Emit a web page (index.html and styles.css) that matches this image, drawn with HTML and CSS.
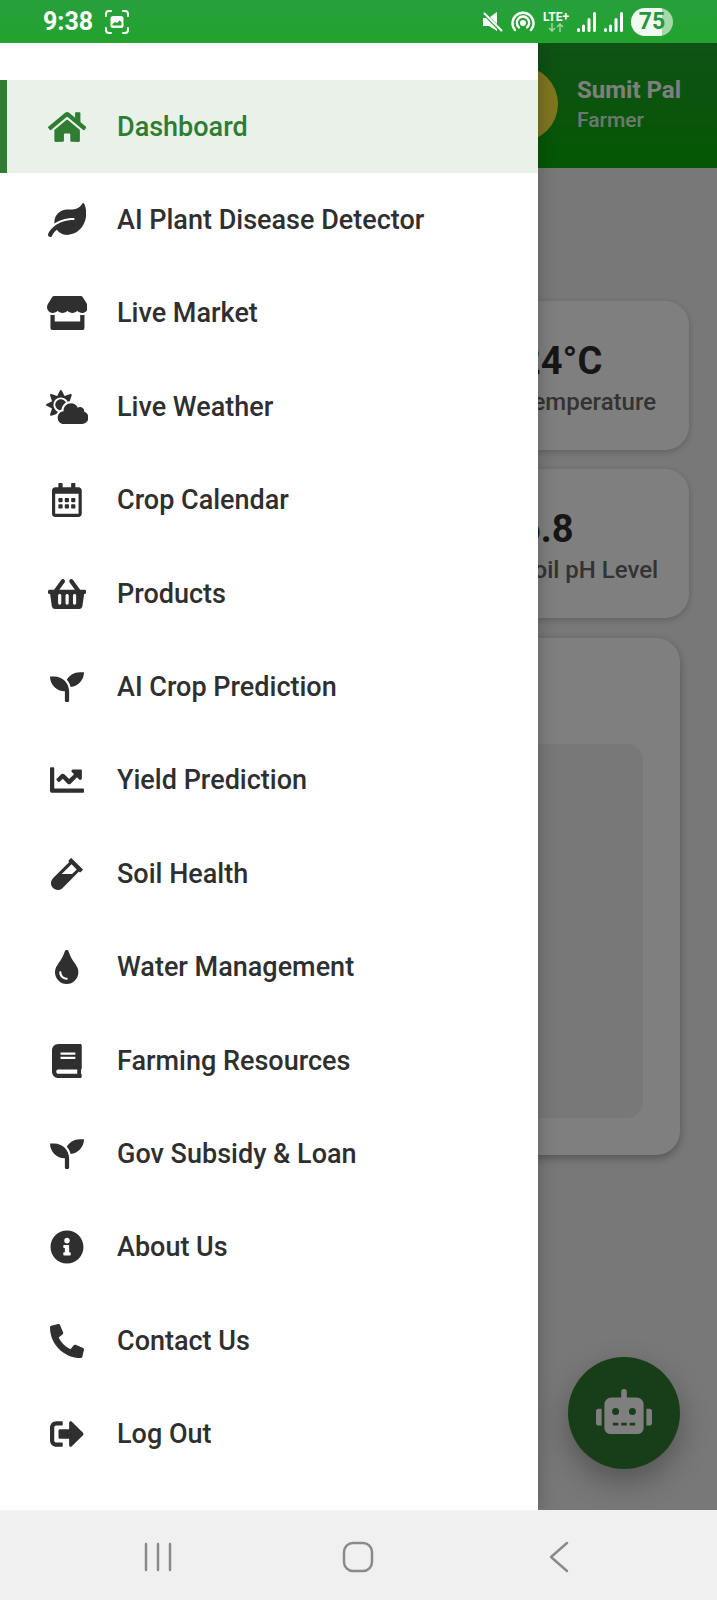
FILE: index.html
```html
<!DOCTYPE html>
<html lang="en">
<head>
<meta charset="utf-8">
<meta name="viewport" content="width=device-width, initial-scale=1">
<title>Farmer Dashboard</title>
<link rel="stylesheet" href="styles.css">
</head>
<body>
<div class="status-bar">
  <div class="status-group">
    <span class="clock">9:38</span>
    <svg class="capture-icon" viewBox="0 0 24 24" fill="none" stroke="currentColor" stroke-width="2" stroke-linecap="round">
      <path d="M1 6V4a3 3 0 0 1 3-3h2M18 1h2a3 3 0 0 1 3 3v2M23 18v2a3 3 0 0 1-3 3h-2M6 23H4a3 3 0 0 1-3-3v-2"/>
      <path fill="currentColor" stroke="none" fill-rule="evenodd" d="M8 6h8a2.500 2.500 0 0 1 2.500 2.500v7a2.500 2.500 0 0 1-2.500 2.500H8a2.500 2.500 0 0 1-2.500-2.500v-7A2.500 2.500 0 0 1 8 6zM7.500 15.500h9V12l-2-1.500-2.500 2.500-2-1-2.500 2z"/>
    </svg>
  </div>
  <div class="status-group status-right">
    <svg class="mute-icon" viewBox="0 0 20 20"><path fill="currentColor" d="M0 6h3l11 11v2L6 14H0zM7 5l7-5v12z"/><path stroke="currentColor" stroke-width="2" stroke-linecap="round" d="M1.500 1.500l17 17"/></svg>
    <svg class="hotspot-icon" viewBox="0 0 24 22" fill="none" stroke="currentColor" stroke-width="2.400" stroke-linecap="round"><path d="M4 19A10.500 10.500 0 1 1 20 19"/><path d="M8 16.500A6.200 6.200 0 1 1 16 16.500"/><circle cx="12" cy="12" r="1.800" fill="currentColor"/></svg>
    <div class="network">
      <span>LTE+</span>
      <svg viewBox="0 0 16 9" fill="none" stroke="currentColor" stroke-width="1.500"><path d="M4 0v8M1 5l3 3 3-3M12 9V1M9 4l3-3 3 3"/></svg>
    </div>
    <svg class="signal-icon" viewBox="0 0 19 20" fill="none" stroke="currentColor" stroke-width="3" stroke-linecap="round"><path d="M1.500 17.500v1M6.500 14v4.500M12 7.500v11M17.500 1.500v17"/></svg>
    <svg class="signal-icon" viewBox="0 0 19 20" fill="none" stroke="currentColor" stroke-width="3" stroke-linecap="round"><path d="M1.500 17.500v1M6.500 14v4.500M12 7.500v11M17.500 1.500v17"/></svg>
    <span class="battery">75</span>
  </div>
</div>

<div class="app">
  <header class="app-header">
    <div class="avatar"></div>
    <div class="profile">
      <strong class="profile-name">Sumit Pal</strong>
      <span class="profile-role">Farmer</span>
    </div>
  </header>
  <main class="content">
    <section class="stats">
      <article class="stat-card">
        <strong class="stat-value">24°C</strong>
        <span class="stat-label">Temperature</span>
      </article>
      <article class="stat-card">
        <strong class="stat-value">6.8</strong>
        <span class="stat-label">Soil pH Level</span>
      </article>
    </section>
    <section class="panel"><div class="panel-body"></div></section>
  </main>
  <button class="assistant" type="button" aria-label="Assistant">
    <svg viewBox="0 0 640 512" fill="currentColor"><path d="M32 224H64V416H32A32 32 0 0 1 0 384V256A32 32 0 0 1 32 224Zm512-48V448a64 64 0 0 1-64 64H160a64 64 0 0 1-64-64V176a80 80 0 0 1 80-80H288V32a32 32 0 0 1 64 0V96H464A80 80 0 0 1 544 176ZM264 256a40 40 0 1 0-40 40A40 40 0 0 0 264 256Zm-8 128H192v32h64Zm96 0H288v32h64ZM456 256a40 40 0 1 0-40 40A40 40 0 0 0 456 256Zm-8 128H384v32h64ZM640 256V384a32 32 0 0 1-32 32H576V224h32A32 32 0 0 1 640 256Z"/></svg>
  </button>
  <div class="scrim"></div>

  <nav class="drawer" aria-label="Main menu">
    <ul class="menu">
      <li><a class="menu-link active" href="#"><span class="menu-icon"><svg viewBox="0 0 576 512"><path d="M280.370 148.260L96 300.110V464a16 16 0 0 0 16 16l112.060-.29a16 16 0 0 0 15.920-16V368a16 16 0 0 1 16-16h64a16 16 0 0 1 16 16v95.640a16 16 0 0 0 16 16.050L464 480a16 16 0 0 0 16-16V300L295.670 148.260a12.190 12.190 0 0 0-15.300 0zM571.600 251.470L488 182.560V44.050a12 12 0 0 0-12-12h-56a12 12 0 0 0-12 12v72.610L318.470 43a48 48 0 0 0-61 0L4.340 251.470a12 12 0 0 0-1.600 16.900l25.500 31A12 12 0 0 0 45.150 301l235.220-193.740a12.190 12.190 0 0 1 15.300 0L530.900 301a12 12 0 0 0 16.900-1.600l25.500-31a12 12 0 0 0-1.700-16.930z"/></svg></span>Dashboard</a></li>
      <li><a class="menu-link" href="#"><span class="menu-icon"><svg viewBox="0 0 576 512"><path d="M546.2 9.7c-5.6-12.5-21.6-13-28.3-1.2C486.9 62.4 431.4 96 368 96h-80C182 96 96 182 96 288c0 7 .8 13.7 1.5 20.5C161.3 262.8 253.4 224 384 224c8.8 0 16 7.2 16 16s-7.2 16-16 16C132.600 256 26 410.1 2.4 468c-6.6 16.3 1.2 34.9 17.5 41.6 16.4 6.8 35-1.1 41.8-17.3 1.5-3.6 20.9-47.9 71.9-90.6 32.4 43.900 94 85.800 174.900 77.200C465.500 467.500 576 326.700 576 154.300c0-50.200-10.800-102.200-29.800-144.600z"/></svg></span>AI Plant Disease Detector</a></li>
      <li><a class="menu-link" href="#"><span class="menu-icon"><svg viewBox="0 0 616 512"><path d="M602 118.600L537.100 15C531.300 5.700 521 0 510 0H106C95 0 84.700 5.700 78.900 15L14 118.600c-33.500 53.500-3.800 127.900 58.800 136.400 4.500.6 9.100.9 13.700.9 29.600 0 55.800-13 73.800-33.100 18 20.100 44.300 33.100 73.800 33.100s55.800-13 73.800-33.100c18 20.100 44.300 33.100 73.800 33.100 29.600 0 55.800-13 73.800-33.100 18.100 20.100 44.300 33.100 73.800 33.100 4.700 0 9.200-.3 13.700-.9 62.800-8.400 92.600-82.800 59-136.400zM529.500 288c-10 0-19.900-1.500-29.500-3.800V384H116v-99.800c-9.600 2.200-19.500 3.800-29.500 3.800-6 0-12.100-.4-18-1.200-5.600-.8-11.100-2.100-16.400-3.600V480c0 17.700 14.300 32 32 32h448c17.700 0 32-14.300 32-32V283.200c-5.400 1.600-10.800 2.900-16.400 3.600-6.100.8-12.100 1.200-18.200 1.200z"/></svg></span>Live Market</a></li>
      <li><a class="menu-link" href="#"><span class="menu-icon"><svg viewBox="0 0 640 512"><path d="M575.200 325.700c.2-1.900.8-3.700.8-5.600 0-35.300-28.700-64-64-64-12.600 0-24.200 3.800-34.100 10-17.600-38.800-56.500-66-101.900-66-61.800 0-112 50.100-112 112 0 3 .7 5.800.9 8.700-49.600 3.700-88.900 44.700-88.900 95.300 0 53 43 96 96 96h272c53 0 96-43 96-96 0-42.100-27.200-77.400-64.800-90.400zm-430.400-22.600c-43.700-43.700-43.700-114.700 0-158.300 43.700-43.700 114.700-43.700 158.400 0 9.700 9.700 16.900 20.900 22.300 32.700 9.800-3.700 20.100-6 30.700-7.500L386 81.100c4-11.900-7.300-23.100-19.200-19.200L279 91.200 237.500 8.400C232-2.800 216-2.800 210.400 8.400L169 91.200 81.100 61.900C69.300 58 58 69.300 61.900 81.100l29.300 87.800-82.800 41.500c-11.200 5.600-11.200 21.500 0 27.100l82.800 41.400-29.300 87.800c-4 11.900 7.300 23.100 19.200 19.200l76.100-25.300c6.100-12.400 14-23.700 23.600-33.500-13-5.400-25.400-13.400-36-24zm-4.800-79.200c0 40.800 29.300 74.800 67.900 82.300 8-4.700 16.300-8.800 25.200-11.700 5.400-44.300 31-82.500 67.400-105C287.300 160.400 258 140 224 140c-46.300 0-84 37.600-84 83.900z"/></svg></span>Live Weather</a></li>
      <li><a class="menu-link" href="#"><span class="menu-icon"><svg viewBox="0 0 448 512"><path d="M148 288h-40c-6.600 0-12-5.400-12-12v-40c0-6.600 5.400-12 12-12h40c6.600 0 12 5.400 12 12v40c0 6.600-5.400 12-12 12zm108-12v-40c0-6.600-5.400-12-12-12h-40c-6.600 0-12 5.400-12 12v40c0 6.600 5.400 12 12 12h40c6.600 0 12-5.400 12-12zm96 0v-40c0-6.600-5.400-12-12-12h-40c-6.600 0-12 5.400-12 12v40c0 6.600 5.400 12 12 12h40c6.600 0 12-5.400 12-12zm-96 96v-40c0-6.600-5.400-12-12-12h-40c-6.600 0-12 5.400-12 12v40c0 6.600 5.400 12 12 12h40c6.600 0 12-5.400 12-12zm-96 0v-40c0-6.600-5.400-12-12-12h-40c-6.600 0-12 5.400-12 12v40c0 6.600 5.400 12 12 12h40c6.600 0 12-5.400 12-12zm192 0v-40c0-6.600-5.400-12-12-12h-40c-6.600 0-12 5.400-12 12v40c0 6.600 5.400 12 12 12h40c6.600 0 12-5.400 12-12zm96-260v352c0 26.500-21.500 48-48 48H48c-26.500 0-48-21.500-48-48V112c0-26.500 21.500-48 48-48h48V12c0-6.600 5.400-12 12-12h40c6.600 0 12 5.400 12 12v52h128V12c0-6.600 5.400-12 12-12h40c6.600 0 12 5.400 12 12v52h48c26.500 0 48 21.500 48 48zm-48 346V160H48v298c0 3.300 2.700 6 6 6h340c3.300 0 6-2.700 6-6z"/></svg></span>Crop Calendar</a></li>
      <li><a class="menu-link" href="#"><span class="menu-icon"><svg viewBox="0 0 576 512"><path d="M576 216v16c0 13.255-10.745 24-24 24h-8l-26.113 182.788C514.509 462.435 494.257 480 470.370 480H105.630c-23.887 0-44.139-17.565-47.518-41.212L32 256h-8c-13.255 0-24-10.745-24-24v-16c0-13.255 10.745-24 24-24h67.341l106.780-146.821c10.395-14.292 30.407-17.453 44.701-7.058 14.293 10.395 17.453 30.408 7.058 44.701L170.477 192h235.046L326.120 82.821c-10.395-14.292-7.234-34.306 7.059-44.701 14.291-10.395 34.306-7.235 44.701 7.058L484.659 192H552c13.255 0 24 10.745 24 24zM312 392V280c0-13.255-10.745-24-24-24s-24 10.745-24 24v112c0 13.255 10.745 24 24 24s24-10.745 24-24zm112 0V280c0-13.255-10.745-24-24-24s-24 10.745-24 24v112c0 13.255 10.745 24 24 24s24-10.745 24-24zm-224 0V280c0-13.255-10.745-24-24-24s-24 10.745-24 24v112c0 13.255 10.745 24 24 24s24-10.745 24-24z"/></svg></span>Products</a></li>
      <li><a class="menu-link" href="#"><span class="menu-icon"><svg viewBox="0 0 512 512"><path d="M64 96H0c0 123.700 100.300 224 224 224v144c0 8.800 7.200 16 16 16h32c8.800 0 16-7.200 16-16V320C288 196.300 187.700 96 64 96zm384-64c-84.200 0-157.400 46.500-195.700 115.200 27.700 30.200 48.200 66.900 59 107.600C424 243.100 512 147.900 512 32h-64z"/></svg></span>AI Crop Prediction</a></li>
      <li><a class="menu-link" href="#"><span class="menu-icon"><svg viewBox="0 0 512 512"><path d="M496 384H64V80c0-8.840-7.160-16-16-16H16C7.160 64 0 71.160 0 80v336c0 17.670 14.330 32 32 32h464c8.840 0 16-7.160 16-16v-32c0-8.840-7.160-16-16-16zM464 96H345.940c-21.380 0-32.090 25.850-16.970 40.970l32.400 32.400L288 242.750l-73.370-73.370c-12.500-12.500-32.760-12.500-45.250 0l-68.690 68.690c-6.250 6.250-6.250 16.380 0 22.630l22.620 22.620c6.250 6.250 16.380 6.250 22.630 0L192 237.250l73.370 73.370c12.500 12.500 32.760 12.500 45.250 0l96-96 32.400 32.400c15.120 15.120 40.970 4.410 40.970-16.970V112c.01-8.840-7.150-16-15.990-16z"/></svg></span>Yield Prediction</a></li>
      <li><a class="menu-link" href="#"><span class="menu-icon"><svg viewBox="0 0 480 512"><path d="M477.700 186.100L309.500 18.300c-3.100-3.100-8.200-3.100-11.300 0l-34 33.900c-3.100 3.100-3.100 8.200 0 11.300l11.200 11.100L33 316.500c-38.800 38.700-45.100 102-9.400 143.500 20.600 24 49.500 36 78.400 35.900 26.400 0 52.800-10 72.900-30.100l246.300-245.700 11.200 11.100c3.100 3.100 8.200 3.100 11.300 0l34-33.900c3.100-3 3.100-8.100 0-11.200zM318 256H161l148-147.700 78.500 78.300L318 256z"/></svg></span>Soil Health</a></li>
      <li><a class="menu-link" href="#"><span class="menu-icon"><svg viewBox="0 0 352 512"><path d="M205.220 22.090c-7.940-28.780-49.440-30.120-58.440 0C100.010 179.850 0 222.720 0 333.910 0 432.350 78.720 512 176 512s176-79.650 176-178.090c0-111.750-99.790-153.340-146.780-311.820zM176 448c-61.750 0-112-50.250-112-112 0-8.840 7.160-16 16-16s16 7.160 16 16c0 44.110 35.890 80 80 80 8.840 0 16 7.160 16 16s-7.160 16-16 16z"/></svg></span>Water Management</a></li>
      <li><a class="menu-link" href="#"><span class="menu-icon"><svg viewBox="0 0 448 512"><path d="M448 360V24c0-13.300-10.700-24-24-24H96C43 0 0 43 0 96v320c0 53 43 96 96 96h328c13.300 0 24-10.700 24-24v-16c0-7.500-3.500-14.300-8.900-18.700-4.200-15.400-4.200-59.300 0-74.700 5.400-4.300 8.900-11.100 8.900-18.600zM128 134c0-3.300 2.700-6 6-6h212c3.300 0 6 2.700 6 6v20c0 3.300-2.700 6-6 6H134c-3.300 0-6-2.700-6-6v-20zm0 64c0-3.300 2.700-6 6-6h212c3.300 0 6 2.700 6 6v20c0 3.300-2.700 6-6 6H134c-3.300 0-6-2.700-6-6v-20zm253.400 250H96c-17.700 0-32-14.300-32-32 0-17.600 14.400-32 32-32h285.400c-1.900 17.100-1.900 46.900 0 64z"/></svg></span>Farming Resources</a></li>
      <li><a class="menu-link" href="#"><span class="menu-icon"><svg viewBox="0 0 512 512"><path d="M64 96H0c0 123.700 100.300 224 224 224v144c0 8.800 7.200 16 16 16h32c8.800 0 16-7.200 16-16V320C288 196.300 187.700 96 64 96zm384-64c-84.200 0-157.400 46.500-195.700 115.200 27.700 30.200 48.200 66.900 59 107.600C424 243.100 512 147.900 512 32h-64z"/></svg></span>Gov Subsidy &amp; Loan</a></li>
      <li><a class="menu-link" href="#"><span class="menu-icon"><svg viewBox="0 0 512 512"><path d="M256 8C119.043 8 8 119.083 8 256c0 136.997 111.043 248 248 248s248-111.003 248-248C504 119.083 392.957 8 256 8zm0 110c23.196 0 42 18.804 42 42s-18.804 42-42 42-42-18.804-42-42 18.804-42 42-42zm56 254c0 6.627-5.373 12-12 12h-88c-6.627 0-12-5.373-12-12v-24c0-6.627 5.373-12 12-12h12v-64h-12c-6.627 0-12-5.373-12-12v-24c0-6.627 5.373-12 12-12h64c6.627 0 12 5.373 12 12v100h12c6.627 0 12 5.373 12 12v24z"/></svg></span>About Us</a></li>
      <li><a class="menu-link" href="#"><span class="menu-icon"><svg viewBox="0 0 512 512"><path d="M497.390 361.800l-112-48a24 24 0 0 0-28 6.900l-49.600 60.600A370.660 370.660 0 0 1 130.600 204.110l60.600-49.600a23.940 23.940 0 0 0 6.900-28l-48-112A24.160 24.160 0 0 0 122.600.610l-104 24A24 24 0 0 0 0 48c0 256.500 207.900 464 464 464a24 24 0 0 0 23.400-18.600l24-104a24.290 24.290 0 0 0-14.010-27.600z"/></svg></span>Contact Us</a></li>
      <li><a class="menu-link" href="#"><span class="menu-icon"><svg viewBox="0 0 512 512"><path d="M497 273L329 441c-15 15-41 4.500-41-17v-96H152c-13.300 0-24-10.700-24-24v-96c0-13.300 10.700-24 24-24h136V88c0-21.400 25.900-32 41-17l168 168c9.300 9.400 9.300 24.600 0 34zM192 436v-40c0-6.600-5.400-12-12-12H96c-17.700 0-32-14.300-32-32V160c0-17.700 14.300-32 32-32h84c6.600 0 12-5.400 12-12V76c0-6.600-5.400-12-12-12H96c-53 0-96 43-96 96v192c0 53 43 96 96 96h84c6.600 0 12-5.400 12-12z"/></svg></span>Log Out</a></li>
    </ul>
  </nav>
</div>

<div class="system-nav">
  <button type="button" aria-label="Recent apps"><svg viewBox="0 0 32 32"><path d="M4 3v26M16 3v26M28 3v26"/></svg></button>
  <button type="button" aria-label="Home"><svg viewBox="0 0 32 32"><rect x="2" y="2" width="28" height="28" rx="9"/></svg></button>
  <button type="button" aria-label="Back"><svg viewBox="0 0 32 32"><path d="M24 2L8 16l16 14"/></svg></button>
</div>
</body>
</html>
```
FILE: styles.css
```css
* {
  box-sizing: border-box;
}

body {
  margin: 0;
  min-height: 100vh;
  display: flex;
  flex-direction: column;
  font-family: Roboto, "Noto Sans", sans-serif;
  background: #f0f0f0;
}

button {
  border: 0;
  padding: 0;
  background: none;
}

svg {
  display: block;
}

/* Status bar */
.status-bar {
  height: 43px;
  padding: 0 44px 0 43px;
  display: flex;
  align-items: center;
  justify-content: space-between;
  color: #fff;
  background: linear-gradient(#28a03c, #22a22e);
}

.status-group {
  display: flex;
  align-items: center;
  gap: 12px;
}

.status-right {
  gap: 8px;
}

.clock {
  font-size: 25px;
  font-weight: 700;
}

.capture-icon {
  width: 24px;
  height: 24px;
}

.mute-icon {
  width: 20px;
  height: 20px;
}

.hotspot-icon {
  width: 24px;
  height: 22px;
}

.network {
  display: flex;
  flex-direction: column;
  align-items: center;
  font-size: 12px;
  font-weight: 700;
  line-height: 12px;
}

.network svg {
  width: 16px;
  height: 9px;
  opacity: .55;
}

.signal-icon {
  width: 19px;
  height: 20px;
}

.battery {
  width: 42px;
  height: 28px;
  border-radius: 14px;
  font-size: 23px;
  font-weight: 700;
  line-height: 28px;
  text-align: center;
  color: #23983a;
  background: linear-gradient(90deg, #f1faf2 75%, #a5d9aa 75%);
}

/* Page behind the drawer */
.app {
  position: relative;
  flex: 1;
  overflow: hidden;
}

.app-header {
  height: 125px;
  padding: 0 36px 4px;
  display: flex;
  align-items: center;
  justify-content: flex-end;
  gap: 19px;
  color: #fff;
  background: linear-gradient(#1ea42a, #0aae0a);
}

.avatar {
  width: 76px;
  height: 76px;
  border-radius: 50%;
  background: #ffec3c;
}

.profile {
  display: flex;
  flex-direction: column;
}

.profile-name {
  font-size: 24px;
  line-height: 32px;
}

.profile-role {
  font-size: 21px;
  font-weight: 500;
  line-height: 28px;
  opacity: .85;
}

.content {
  padding: 133px 28px 0;
}

.stats {
  display: grid;
  grid-template-columns: 1fr 1fr;
  gap: 19px;
  margin-bottom: 20px;
}

.stat-card {
  grid-column: 2;
  height: 149px;
  padding: 6px 0 0 151px;
  display: flex;
  flex-direction: column;
  justify-content: center;
  white-space: nowrap;
  border-radius: 24px;
  background: #fff;
  box-shadow: 0 2px 6px rgba(0, 0, 0, .2);
}

.stat-value {
  font-size: 38px;
  line-height: 46px;
  color: #2c2c2c;
}

.stat-label {
  font-size: 24px;
  font-weight: 500;
  line-height: 36px;
  color: #666;
}

.panel {
  margin: 0 9px;
  padding: 106px 37px 37px;
  border-radius: 24px;
  background: #fff;
  box-shadow: 0 3px 8px rgba(0, 0, 0, .3);
}

.panel-body {
  height: 374px;
  border-radius: 16px;
  background: #f0f0f0;
}

.assistant {
  position: absolute;
  right: 37px;
  bottom: 41px;
  width: 112px;
  height: 112px;
  padding-bottom: 3px;
  display: flex;
  align-items: center;
  justify-content: center;
  border-radius: 50%;
  color: #fff;
  background: #2e7d32;
  box-shadow: 0 12px 30px rgba(0, 0, 0, .3);
}

.assistant svg {
  width: 56px;
  height: 45px;
}

.scrim {
  position: absolute;
  inset: 0;
  background: rgba(0, 0, 0, .5);
}

/* Drawer */
.drawer {
  position: absolute;
  inset: 0 auto 0 0;
  width: 75%;
  padding: 37px 0 29px;
  display: flex;
  background: #fff;
  box-shadow: 0 0 18px rgba(0, 0, 0, .25);
}

.menu {
  flex: 1;
  display: grid;
  grid-auto-rows: 1fr;
  margin: 0;
  padding: 0;
  list-style: none;
}

.menu-link {
  height: 100%;
  padding: 0 37px;
  display: flex;
  align-items: center;
  gap: 27px;
  border-left: 7px solid transparent;
  font-size: 27px;
  font-weight: 500;
  color: #2f2f2f;
  text-decoration: none;
  white-space: nowrap;
}

.menu-link.active {
  border-left-color: #2e7d32;
  color: #2e7d32;
  background: #e9f1e9;
}

.menu-icon {
  width: 46px;
  display: flex;
  justify-content: center;
}

.menu-icon svg {
  height: 34px;
  fill: currentColor;
}

/* System navigation */
.system-nav {
  height: 90px;
  padding: 3px 8% 0;
  display: grid;
  grid-template-columns: repeat(3, 1fr);
  align-items: center;
  justify-items: center;
  background: #f0f0f0;
}

.system-nav svg {
  width: 32px;
  height: 32px;
  fill: none;
  stroke: #8a8a8a;
  stroke-width: 2.5;
  stroke-linecap: round;
  stroke-linejoin: round;
}
```
